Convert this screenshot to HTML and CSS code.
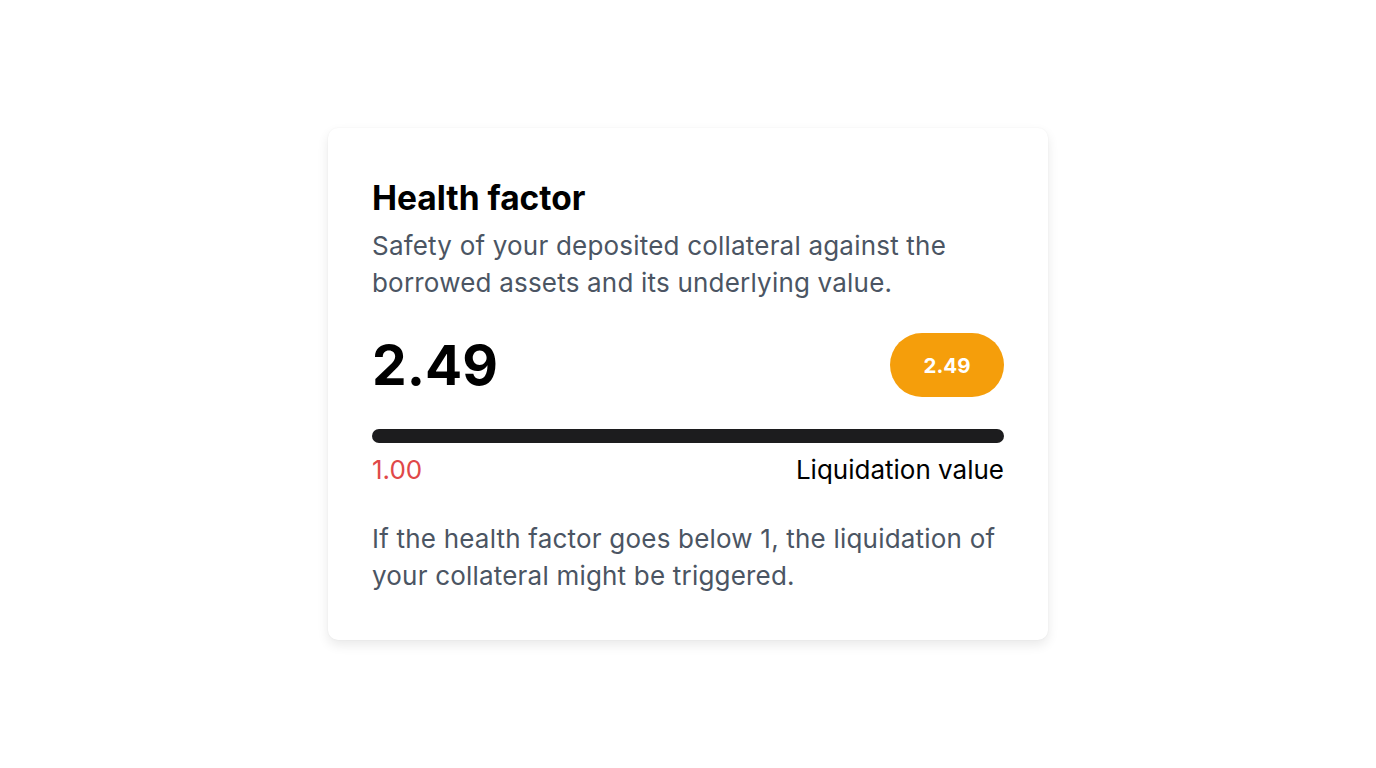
FILE: index.html
```html
<!DOCTYPE html>
<html lang="en">
<head>
<meta charset="utf-8">
<title>Health factor</title>
<link rel="stylesheet" href="styles.css">
</head>
<body>
<main class="page">
  <section class="card">
    <h2 class="title">Health factor</h2>
    <p class="desc">Safety of your deposited collateral against the borrowed assets and its underlying value.</p>
    <div class="value-row">
      <span class="value">2.49</span>
      <span class="badge">2.49</span>
    </div>
    <div class="bar"></div>
    <div class="scale">
      <span class="min">1.00</span>
      <span class="label">Liquidation value</span>
    </div>
    <p class="note">If the health factor goes below 1, the liquidation of your collateral might be triggered.</p>
  </section>
</main>
</body>
</html>
```
FILE: styles.css
```css
* { box-sizing: border-box; }
html, body { margin: 0; padding: 0; }
body {
  background: #ffffff;
  font-family: Inter, "Noto Sans", sans-serif;
  color: #000;
}
.page {
  height: 768px;
  display: flex;
  align-items: center;
  justify-content: center;
}
.card {
  width: 720px;
  height: 512px;
  background: #fff;
  border-radius: 10px;
  padding: 50px 44px 0;
  box-shadow: 0 5px 12px rgba(0,0,0,0.09), 0 0 2px rgba(0,0,0,0.05);
}
.title {
  margin: 0;
  font-size: 33.5px;
  line-height: 40px;
  font-weight: 700;
}
.desc, .note {
  margin: 0;
  font-size: 26px;
  line-height: 37px;
  letter-spacing: 0.2px;
  color: #4b5563;
}
.desc { margin-top: 9px; }
.value-row {
  display: flex;
  justify-content: space-between;
  align-items: center;
  margin-top: 32px;
}
.value {
  font-size: 55px;
  font-weight: 700;
  line-height: 64px;
}
.badge {
  background: #f59e0b;
  color: #fff;
  font-weight: 700;
  font-size: 20.5px;
  height: 64px;
  width: 114px;
  border-radius: 32px;
  display: flex;
  align-items: center;
  justify-content: center;
}
.bar {
  margin-top: 32px;
  height: 14px;
  border-radius: 7px;
  background: #1c1c1e;
}
.scale {
  display: flex;
  justify-content: space-between;
  font-size: 26px;
  line-height: 32px;
  margin-top: 11px;
}
.min { color: #e04848; }
.note { margin-top: 34px; }
```
